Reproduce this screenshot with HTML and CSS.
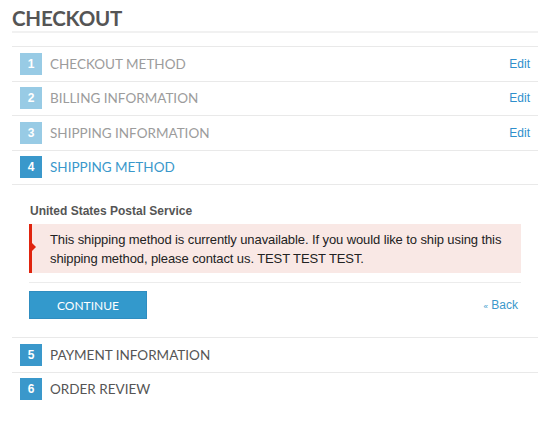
FILE: index.html
```html
<!DOCTYPE html>
<html>
<head>
<meta charset="utf-8">
<link rel="stylesheet" href="styles.css">
</head>
<body>
<div class="page">
  <h1 class="title">CHECKOUT</h1>
  <ol class="steps">
    <li class="step done">
      <div class="step-head"><span class="num">1</span><span class="label">CHECKOUT METHOD</span><a class="edit">Edit</a></div>
    </li>
    <li class="step done">
      <div class="step-head"><span class="num">2</span><span class="label">BILLING INFORMATION</span><a class="edit">Edit</a></div>
    </li>
    <li class="step done">
      <div class="step-head"><span class="num">3</span><span class="label">SHIPPING INFORMATION</span><a class="edit">Edit</a></div>
    </li>
    <li class="step active">
      <div class="step-head"><span class="num">4</span><span class="label">SHIPPING METHOD</span></div>
      <div class="step-body">
        <div class="carrier">United States Postal Service</div>
        <div class="error">This shipping method is currently unavailable. If you would like to ship using this shipping method, please contact us. TEST TEST TEST.</div>
        <div class="actions">
          <button class="btn">CONTINUE</button>
          <a class="back"><span class="laquo">«</span> Back</a>
        </div>
      </div>
    </li>
    <li class="step future">
      <div class="step-head"><span class="num">5</span><span class="label">PAYMENT INFORMATION</span></div>
    </li>
    <li class="step future last">
      <div class="step-head"><span class="num">6</span><span class="label">ORDER REVIEW</span></div>
    </li>
  </ol>
</div>
</body>
</html>
```
FILE: styles.css
```css
html, body {
  margin: 0;
  padding: 0;
  background: #fff;
}
body {
  font-family: "Liberation Sans", Arial, sans-serif;
}
.page {
  padding: 0 12px;
}
.title {
  margin: 0;
  padding-top: 6px;
  height: 25px;
  font-family: Lato, "Liberation Sans", sans-serif;
  font-weight: 700;
  font-size: 20.5px;
  line-height: 25px;
  color: #555;
  border-bottom: 2px solid #f1f1f1;
  letter-spacing: -0.2px;
}
.steps {
  list-style: none;
  margin: 13px 0 0;
  padding: 0;
}
.step {
  border-top: 1px solid #e9e9e9;
}
.step-head {
  display: flex;
  align-items: center;
  height: 33.5px;
  padding: 0 8px;
}
.num {
  width: 22px;
  height: 22px;
  display: flex;
  align-items: center;
  justify-content: center;
  color: #fff;
  font-family: "Liberation Sans", Arial, sans-serif;
  font-weight: 700;
  font-size: 12px;
  background: #3a98cb;
}
.done .num {
  background: #98cbe5;
}
.label {
  margin-left: 8px;
  font-family: Lato, "Liberation Sans", sans-serif;
  font-size: 13.5px;
  color: #555;
  flex: 1;
}
.done .label {
  color: #9c9c9c;
}
.active .label {
  color: #3a98cb;
}
.edit {
  font-family: "Liberation Sans", Arial, sans-serif;
  font-size: 12px;
  color: #2f8fcc;
}
.step-body {
  border-top: 1px solid #e9e9e9;
  padding: 19px 17px 18px 17px;
}
.carrier {
  font-size: 12px;
  font-weight: 700;
  color: #555;
  line-height: 14px;
  margin-bottom: 6px;
  padding-left: 1px;
}
.error {
  position: relative;
  background: #f9e8e5;
  border-left: 3px solid #e0240e;
  color: #222;
  font-size: 13px;
  letter-spacing: -0.1px;
  line-height: 19px;
  padding: 6px 10px 5px 18px;
  width: 461px;
}
.error::before {
  content: "";
  position: absolute;
  left: 0;
  top: 19px;
  border-top: 4px solid transparent;
  border-bottom: 4px solid transparent;
  border-left: 4px solid #e0240e;
}
.actions {
  display: flex;
  align-items: center;
  justify-content: space-between;
  border-top: 1px solid #ececec;
  margin-top: 9px;
  padding-top: 8px;
  width: 492px;
}
.btn {
  width: 118px;
  height: 28px;
  border: 1px solid #2f8dc0;
  background: #3399cc;
  color: #fff;
  font-family: Lato, "Liberation Sans", sans-serif;
  font-size: 12px;
  padding: 0;
}
.back {
  font-size: 12px;
  color: #3a98cb;
  margin-right: 3px;
}
.laquo {
  font-size: 8px;
}
```
